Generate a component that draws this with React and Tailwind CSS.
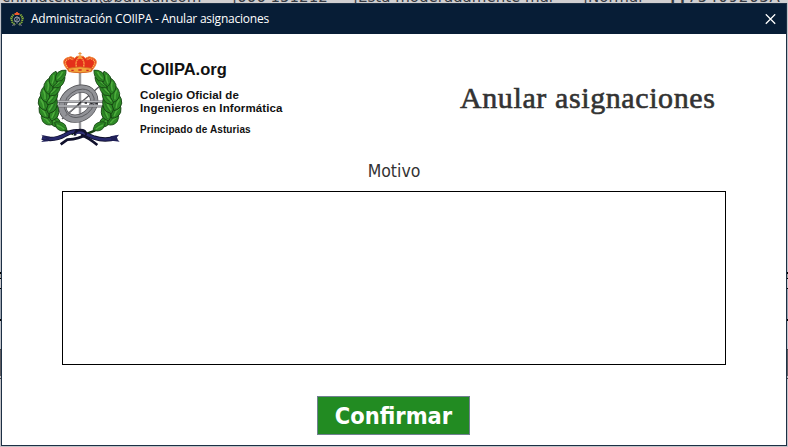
import React from 'react';

const leaves = [
  [74, 232, -42, 1.1], [92, 247, -58, 1.0], [50, 226, -42, 1.1], [72, 208, 22, 1.15],
  [42, 202, -28, 1.15], [66, 186, 30, 1.2], [39, 177, -16, 1.15], [66, 161, 38, 1.2],
  [45, 151, -6, 1.15], [74, 137, 44, 1.15], [56, 126, 6, 1.15], [86, 115, 50, 1.1],
  [71, 105, 14, 1.1], [92, 95, 42, 1.05],
];

function Branch() {
  return (
    <g>
      <path d="M130 270Q82 254 60 210Q42 150 92 92" fill="none" stroke="#173b12" strokeWidth="8" />
      {leaves.map(([x, y, r, s]) => (
        <g key={`${x}-${y}`} transform={`translate(${x} ${y}) rotate(${r}) scale(${s})`}>
          <path d="M1 -22Q15 -7 11 9L2 21Q-13 14 -12 -3Q-9 -15 1 -22Z" fill="#2e8a26" stroke="#154312" strokeWidth="2.2" />
          <path d="M-3 -11Q1 0 -1 13" fill="none" stroke="#4fae3e" strokeWidth="4" />
          <path d="M3 -14Q6 0 2 15" fill="none" stroke="#1e651a" strokeWidth="1.5" />
        </g>
      ))}
    </g>
  );
}

function Crest() {
  return (
    <svg viewBox="0 0 300 330" className="h-[110px] w-[100px] shrink-0" aria-hidden="true">
      <path d="M150 82V258" stroke="#77777b" strokeWidth="7" />
      <path d="M150 82V258" stroke="#bdbdc1" strokeWidth="3" />
      <path d="M96 225L214 122" stroke="#58585c" strokeWidth="4" />
      <g fill="none">
        <ellipse cx="145" cy="179" rx="51" ry="41" transform="rotate(-38 145 179)" stroke="#4a4a4e" strokeWidth="25" />
        <ellipse cx="145" cy="179" rx="51" ry="41" transform="rotate(-38 145 179)" stroke="#929398" strokeWidth="21" />
        <ellipse cx="148" cy="178" rx="48" ry="39" transform="rotate(-38 148 178)" stroke="#56575b" strokeWidth="2.5" />
      </g>
      <path d="M58 173H242M58 187H242" stroke="#68696d" strokeWidth="7" />
      <path d="M58 172H242M58 186H242" stroke="#b7b8bc" strokeWidth="4" />
      <path d="M106 216L158 171" stroke="#77787c" strokeWidth="4" />
      <path d="M143 184l10-11M164 177h7M181 179h7M196 179h7" stroke="#29292c" strokeWidth="4" />
      <Branch />
      <g transform="translate(300 0) scale(-1 1)"><Branch /></g>
      <g strokeLinejoin="round">
        <path d="M116 82L104 65Q96 48 110 42Q124 34 134 43Q139 35 150 36Q161 35 166 43Q176 34 190 42Q204 48 196 65L184 82Q150 90 116 82Z" fill="#e4301a" stroke="#f08a3a" strokeWidth="3" />
        <path d="M118 76Q98 57 112 46Q122 41 130 48M182 76Q202 57 188 46Q178 41 170 48M141 74Q133 54 146 42M159 74Q167 54 154 42" fill="none" stroke="#ffb94f" strokeWidth="4" strokeDasharray="4 2" />
        <path d="M114 73Q150 64 186 73L183 83Q150 90 117 83Z" fill="#f3a53a" stroke="#c8501f" strokeWidth="2" />
        <path d="M124 79h7M145 78h10M169 79h7" stroke="#cf2720" strokeWidth="4" />
        <path d="M150 24V38M145 29H155" stroke="#e88f35" strokeWidth="3" />
        <circle cx="150" cy="40" r="5" fill="#f5a53c" />
      </g>
      <g fill="none" stroke="#10102c">
        <path d="M36 282Q74 291 105 273Q128 258 151 263Q168 271 193 281Q224 292 261 281" strokeWidth="13" />
        <path d="M36 282Q74 291 105 273Q128 258 151 263Q168 271 193 281Q224 292 261 281" stroke="#28286c" strokeWidth="8" />
        <path d="M135 275Q134 258 150 258Q169 258 167 271Q149 286 112 287L92 301M153 273Q174 280 202 303" strokeWidth="8" />
        <path d="M137 270Q151 263 165 271" stroke="#35357b" strokeWidth="4" />
      </g>
      <path d="M33 272l16 11-16 11 22-2 5-14ZM267 272l-26 5 4 13 24 3-10-10Z" fill="#202058" />
    </svg>
  );
}

function TitleIcon() {
  return (
    <svg viewBox="0 0 14 16" className="h-4 w-3.5 shrink-0" fill="none">
      <path d="M3.5 3.5L1.2 7l1 4 3 3M10.5 3.5L12.8 7l-1 4-3 3" stroke="#86ad3a" strokeWidth="2" strokeDasharray="1.4 .6" />
      <circle cx="7" cy="8.5" r="2.5" stroke="#a3a8af" />
      <path d="M7 5v8M4.5 10.5l5-4" stroke="#8e959e" strokeWidth=".7" />
      <path d="M4.5 3h5M7 1v3" stroke="#ee5b2c" strokeWidth="1.8" />
      <path d="M2 14.5l3-1M9 13.5l3 1" stroke="#70688d" />
    </svg>
  );
}

function Backdrop() {
  return (
    <div className="h-full bg-[#c2c1c5]">
      <div className="relative h-[3px] overflow-hidden bg-[#d0cfd1] font-['DejaVu_Sans'] text-[15px] leading-[18px] text-[#373b43]">
        <span className="absolute -top-[12px] left-[2px] whitespace-nowrap">chimatekken@bandai.com</span>
        <span className="absolute -top-[12px] left-[232px] whitespace-nowrap">|666 151212</span>
        <span className="absolute -top-[12px] left-[353px] whitespace-nowrap">|Está moderadamente mal</span>
        <span className="absolute -top-[12px] left-[583px] whitespace-nowrap">|Normal</span>
        <span className="absolute -top-[12px] left-[668px] whitespace-nowrap tracking-[0.7px]">┃┃75409263A</span>
      </div>
      <div className="flex h-[444px] justify-between">
        {[0, 1].map((side) => (
          <div key={side} className="w-px">
            <div className="h-[269px] bg-[#bfc2c9]" />
            <div className="h-0.5 bg-black" />
            <div className="h-1 bg-[#aaa]" />
            <div className="h-px bg-black" />
            <div className="h-[9px] bg-[#c9c8cd]" />
            <div className="h-px bg-black" />
            <div className="h-[30px] bg-[#9ca4b0]" />
            <div className="h-0.5 bg-black" />
            <div className="h-7 bg-[#bfc2c9]" />
            <div className="h-px bg-[#444]" />
            <div className="h-[26px] bg-[#5e5c61]" />
            <div className="mt-0.5 h-px bg-[#444]" />
          </div>
        ))}
      </div>
    </div>
  );
}

export default function App() {
  return (
    <main className="relative h-[447px] w-[788px] overflow-hidden">
      <Backdrop />
      <section className="absolute top-[3px] left-px flex h-[443px] w-[786px] flex-col border border-[#1d3045] bg-white">
        <header className="flex h-[30px] shrink-0 items-center bg-[#071d36] pr-[10px] pl-2 text-white">
          <TitleIcon />
          <h1 className="ml-[7px] grow font-['Open_Sans','Noto_Sans',sans-serif] text-[12px] leading-4 tracking-[-0.23px] whitespace-nowrap">Administración COIIPA - Anular asignaciones</h1>
          <button aria-label="Cerrar" className="flex size-[11px] items-center justify-center">
            <svg viewBox="0 0 11 11" className="size-[11px]" fill="none" stroke="white" strokeWidth="1.3"><path d="M.8.3l9.4 9.4M10.2.3L.8 9.7" /></svg>
          </button>
        </header>
        <div className="flex h-[121px] shrink-0 pt-[10px] pl-7">
          <Crest />
          <div className="ml-[10px] flex w-[170px] flex-col pt-[16px] font-['Liberation_Sans',Arial,sans-serif] font-bold whitespace-nowrap text-[#111]">
            <p className="text-[16.5px] leading-[18px]">COIIPA.org</p>
            <p className="mt-[11px] text-[11.5px] leading-[13px] tracking-[0.1px]">Colegio Oficial de<br />Ingenieros en Informática</p>
            <p className="mt-[9px] text-[10px] leading-3 tracking-[0.1px]">Principado de Asturias</p>
          </div>
          <h2 className="ml-[150px] pt-[36px] font-['Liberation_Serif','Times_New_Roman',serif] text-[30px] leading-[36px] tracking-[0.6px] whitespace-nowrap text-[#333] [-webkit-text-stroke:0.6px_#333]">Anular asignaciones</h2>
        </div>
        <label htmlFor="motivo" className="mt-[4px] h-[32px] shrink-0 text-center font-['DejaVu_Sans_Condensed','DejaVu_Sans',sans-serif] text-[17.5px] leading-[24px] [font-stretch:condensed] text-[#333]">Motivo</label>
        <textarea id="motivo" className="mx-auto block h-[174px] w-[664px] shrink-0 resize-none border border-black bg-white outline-none" />
        <button className="mt-[31px] ml-[315px] h-[39px] w-[153px] shrink-0 border border-[#708090] bg-[#228b22] font-['DejaVu_Sans_Condensed','DejaVu_Sans',sans-serif] text-[23.4px] leading-[38px] font-bold [font-stretch:condensed] text-white">Confirmar</button>
      </section>
    </main>
  );
}
